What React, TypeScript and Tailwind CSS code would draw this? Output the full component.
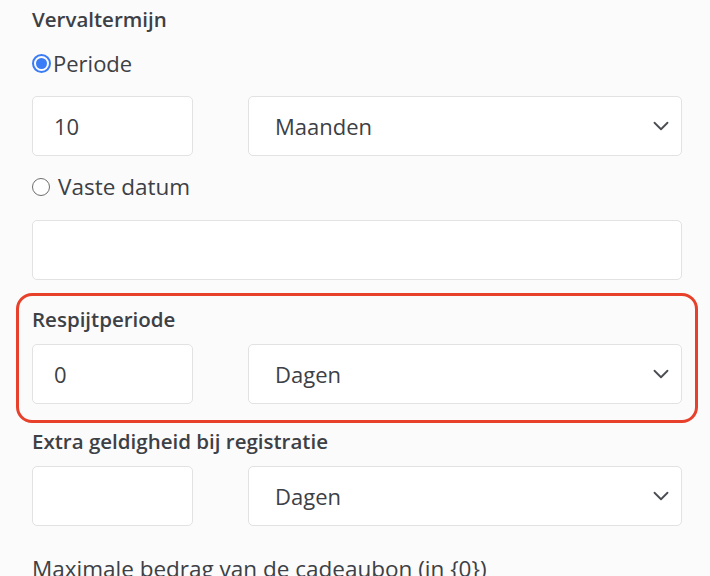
import { ChevronDown } from "lucide-react";

function NumberBox({ value }: { value: string }) {
  return (
    <div className="w-[161px] h-[60px] shrink-0 rounded-[5px] border border-[#e2e2e2] bg-white flex items-center pl-[21px] text-[22px] text-[#3d4045]">
      {value}
    </div>
  );
}

function SelectBox({ value }: { value: string }) {
  return (
    <div className="flex-1 h-[60px] rounded-[5px] border border-[#e2e2e2] bg-white flex items-center justify-between pl-[26px] pr-[7px] text-[22px] text-[#3d4045]">
      <span>{value}</span>
      <ChevronDown className="w-[26px] h-[26px] text-[#4a4d52]" strokeWidth={1.7} />
    </div>
  );
}

function UnitRow({ value, unit, className = "" }: { value: string; unit: string; className?: string }) {
  return (
    <div className={`flex gap-[55px] ${className}`}>
      <NumberBox value={value} />
      <SelectBox value={unit} />
    </div>
  );
}

export default function App() {
  return (
    <div className="min-h-screen bg-[#fbfbfb] pl-8 pr-7 pt-1 text-[#3d4045] font-['Open_Sans',sans-serif] overflow-hidden">
      <div className="h-[30px] leading-[30px] text-[20.5px] font-semibold">Vervaltermijn</div>

      <label className="mt-[14px] h-[30px] flex items-center gap-[2px] text-[22px]">
        <span className="w-[19px] h-[19px] rounded-full border-2 border-[#3a7cf5] p-[2px] flex">
          <span className="flex-1 rounded-full bg-[#3a7cf5]" />
        </span>
        <span>Periode</span>
      </label>

      <UnitRow value="10" unit="Maanden" className="mt-[18px]" />

      <label className="mt-[16px] h-[30px] flex items-center gap-[8px] text-[22.5px]">
        <span className="w-[18px] h-[18px] rounded-full border-[1.5px] border-[#6e6e6e] bg-white" />
        <span>Vaste datum</span>
      </label>

      <div className="mt-[18px] h-[60px] rounded-[5px] border border-[#e2e2e2] bg-white" />

      <div className="mt-[13px] -ml-4 -mr-4 pl-[13px] pr-[13px] pt-[8px] pb-[16px] border-[3px] border-[#e8412b] rounded-[16px]">
        <div className="h-[30px] leading-[30px] text-[20.5px] font-semibold">Respijtperiode</div>
        <UnitRow value="0" unit="Dagen" className="mt-[10px]" />
      </div>

      <div className="mt-[3px] h-[30px] leading-[30px] text-[20.5px] font-semibold">Extra geldigheid bij registratie</div>
      <UnitRow value="" unit="Dagen" className="mt-[10px]" />

      <div className="mt-[28px] h-[30px] leading-[30px] text-[22.5px] whitespace-nowrap">Maximale bedrag van de cadeaubon (in {"{0}"})</div>
    </div>
  );
}
